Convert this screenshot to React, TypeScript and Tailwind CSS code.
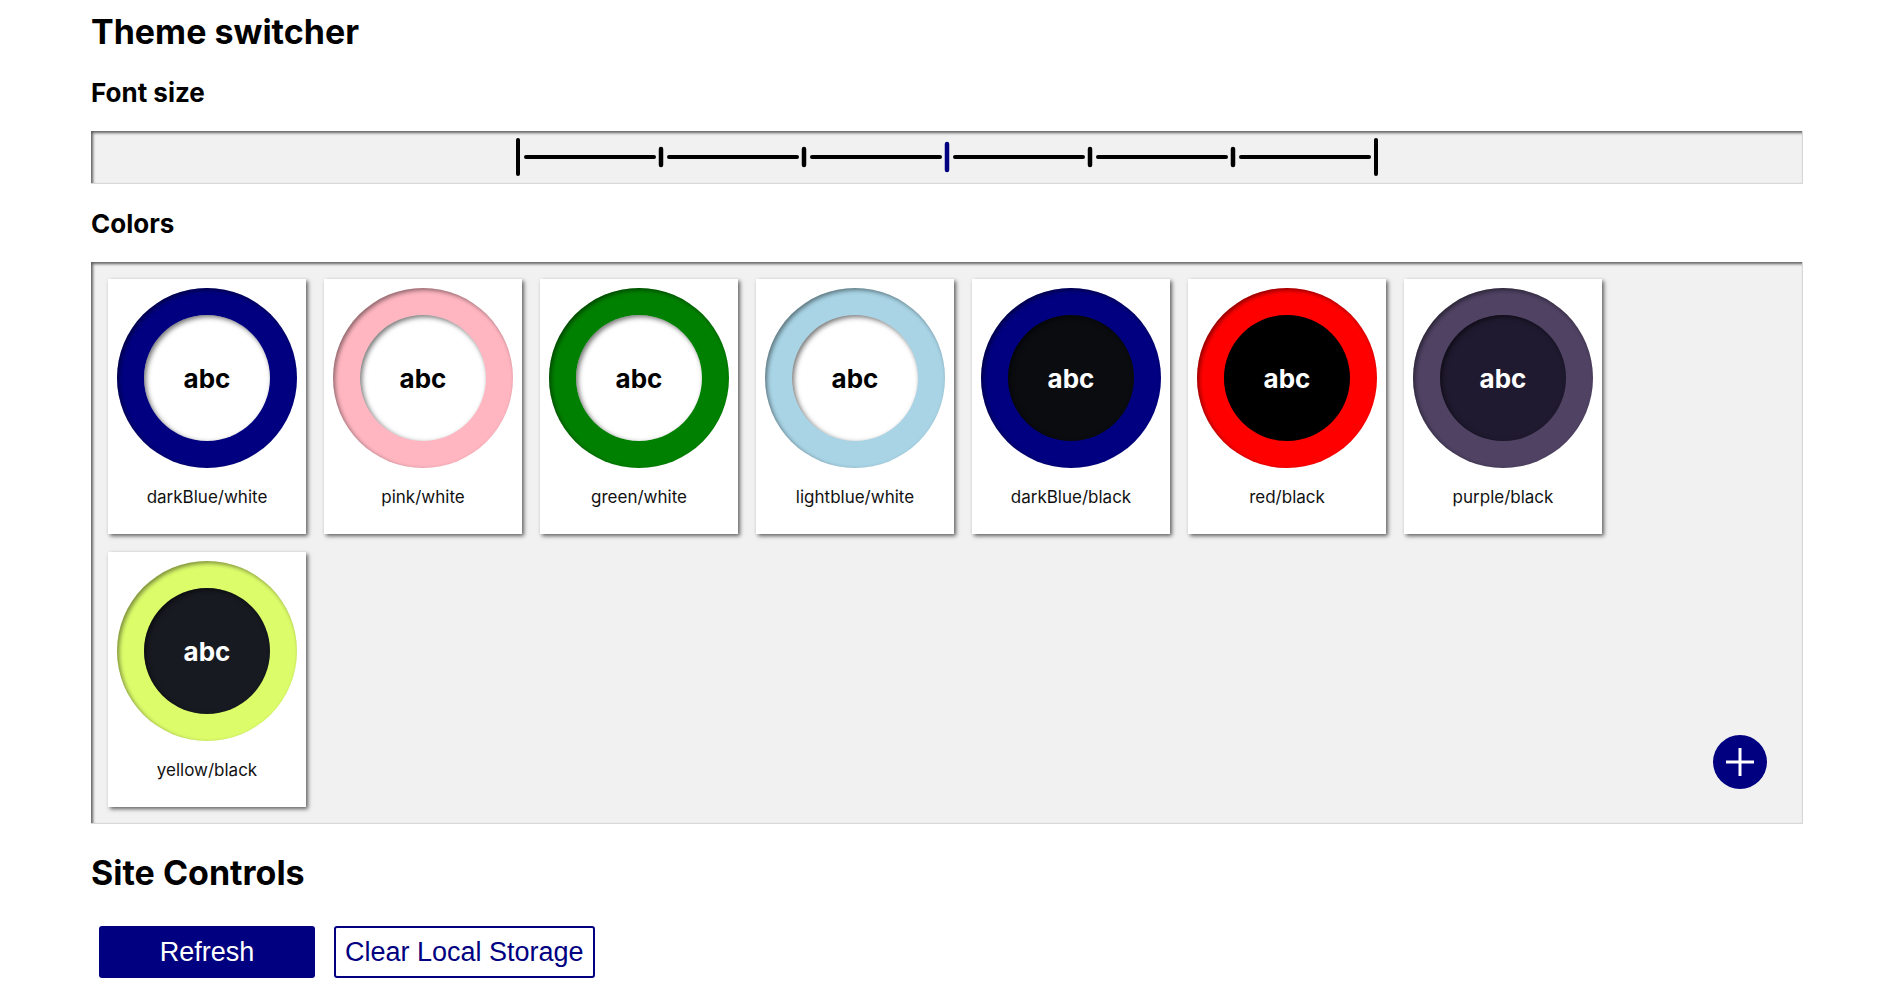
import React from "react";

type Theme = { name: string; ring: string; inner: string; text: string };

const themes: Theme[] = [
  { name: "darkBlue/white", ring: "bg-[#000080]", inner: "bg-white", text: "text-black" },
  { name: "pink/white", ring: "bg-[#ffb6c1]", inner: "bg-white", text: "text-black" },
  { name: "green/white", ring: "bg-[#008000]", inner: "bg-white", text: "text-black" },
  { name: "lightblue/white", ring: "bg-[#a8d4e5]", inner: "bg-white", text: "text-black" },
  { name: "darkBlue/black", ring: "bg-[#000080]", inner: "bg-[#0b0c10]", text: "text-white" },
  { name: "red/black", ring: "bg-[#ff0000]", inner: "bg-black", text: "text-white" },
  { name: "purple/black", ring: "bg-[#4f4263]", inner: "bg-[#201a30]", text: "text-white" },
  { name: "yellow/black", ring: "bg-[#dcfc6a]", inner: "bg-[#171a21]", text: "text-white" },
];

function Slider() {
  const ticks = [0, 1, 2, 3, 4, 5, 6];
  const step = 143;
  const x0 = 4;
  const cy = 20;
  return (
    <svg width={866} height={40} viewBox="0 0 866 40">
      {ticks.slice(0, 6).map((i) => (
        <line
          key={"s" + i}
          x1={x0 + i * step + 8}
          y1={cy}
          x2={x0 + (i + 1) * step - 7}
          y2={cy}
          stroke="#000"
          strokeWidth={4}
          strokeLinecap="round"
        />
      ))}
      {ticks.map((i) => {
        const x = x0 + i * step;
        const end = i === 0 || i === 6;
        const active = i === 3;
        const h = end ? 34 : active ? 26 : 16;
        return (
          <line
            key={"t" + i}
            x1={x}
            y1={cy - h / 2}
            x2={x}
            y2={cy + h / 2}
            stroke={active ? "#000080" : "#000"}
            strokeWidth={end ? 4 : 4.5}
            strokeLinecap="round"
          />
        );
      })}
    </svg>
  );
}

function Card({ t }: { t: Theme }) {
  return (
    <div className="w-[198px] h-[255px] bg-white shadow-[2px_2px_4px_rgba(0,0,0,0.6)] flex flex-col items-center pt-[9px]">
      <div
        className={`w-[180px] h-[180px] rounded-full ${t.ring} shadow-[inset_2px_2px_4px_rgba(0,0,0,0.45)] flex items-center justify-center`}
      >
        <div
          className={`w-[126px] h-[126px] rounded-full ${t.inner} shadow-[inset_2px_2px_5px_rgba(0,0,0,0.55)] flex items-center justify-center`}
        >
          <span className={`${t.text} font-bold text-[26px] leading-none mt-[2px]`}>abc</span>
        </div>
      </div>
      <div className="mt-[21px] text-[17px] leading-none text-[#111]">{t.name}</div>
    </div>
  );
}

export default function App() {
  return (
    <div
      className="bg-white min-h-[992px] pl-[91px] pr-[95px] text-black"
      style={{ fontFamily: "Inter, 'Noto Sans', sans-serif" }}
    >
      <h1 className="pt-[15px] text-[34px] leading-none font-bold">Theme switcher</h1>
      <h2 className="mt-[31px] text-[26px] leading-none font-bold">Font size</h2>
      <div className="mt-[25px] h-[53px] bg-[#f1f1f1] border-r border-b border-[#d8d8d8] shadow-[inset_2px_2px_3px_rgba(0,0,0,0.6)] flex items-center justify-center">
        <Slider />
      </div>
      <h2 className="mt-[27px] text-[26px] leading-none font-bold">Colors</h2>
      <div className="relative mt-[25px] h-[562px] bg-[#f1f1f1] border-r border-b border-[#d8d8d8] shadow-[inset_2px_2px_3px_rgba(0,0,0,0.6)] p-[17px]">
        <div className="flex flex-wrap gap-[18px]">
          {themes.map((t) => (
            <Card key={t.name} t={t} />
          ))}
        </div>
        <button className="absolute right-[35px] bottom-[34px] w-[54px] h-[54px] rounded-full bg-[#000080] flex items-center justify-center">
          <svg width="30" height="30" viewBox="0 0 30 30">
            <rect x="13.5" y="1" width="3" height="28" fill="#fff" />
            <rect x="1" y="13.5" width="28" height="3" fill="#fff" />
          </svg>
        </button>
      </div>
      <h2 className="mt-[32px] text-[34px] leading-none font-bold">Site Controls</h2>
      <div className="mt-[36px] flex gap-[19px] pl-[8px]" style={{ fontFamily: "'Liberation Sans', Arial, sans-serif" }}>
        <button className="w-[216px] h-[52px] bg-[#000080] text-white text-[27px] rounded-[3px]">Refresh</button>
        <button className="h-[52px] px-[9px] bg-white text-[#000080] border-2 border-[#000080] text-[27px] rounded-[3px]">
          Clear Local Storage
        </button>
      </div>
    </div>
  );
}
